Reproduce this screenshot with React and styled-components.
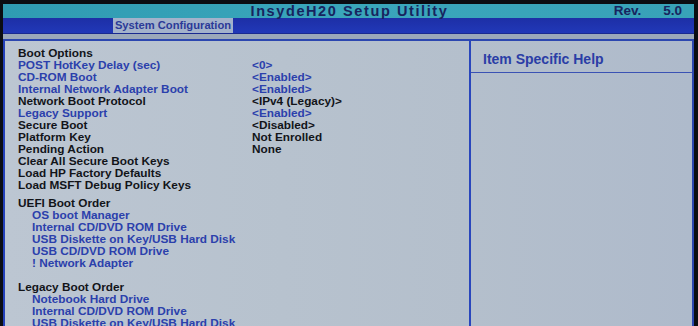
import styled, { createGlobalStyle } from "styled-components";

const Global = createGlobalStyle`
    html, body {
        margin: 0;
        padding: 0;
        background: #0b0d12;
    }
`

const options = [
    { label: "Boot Options", kind: "head" },
    { label: "POST HotKey Delay (sec)", value: "<0>", blue: true },
    { label: "CD-ROM Boot", value: "<Enabled>", blue: true },
    { label: "Internal Network Adapter Boot", value: "<Enabled>", blue: true },
    { label: "Network Boot Protocol", value: "<IPv4 (Legacy)>" },
    { label: "Legacy Support", value: "<Enabled>", blue: true },
    { label: "Secure Boot", value: "<Disabled>" },
    { label: "Platform Key", value: "Not Enrolled" },
    { label: "Pending Action", value: "None" },
    { label: "Clear All Secure Boot Keys" },
    { label: "Load HP Factory Defaults" },
    { label: "Load MSFT Debug Policy Keys" },
]

const uefiOrder = [
    "OS boot Manager",
    "Internal CD/DVD ROM Drive",
    "USB Diskette on Key/USB Hard Disk",
    "USB CD/DVD ROM Drive",
    "! Network Adapter",
]

const legacyOrder = [
    "Notebook Hard Drive",
    "Internal CD/DVD ROM Drive",
    "USB Diskette on Key/USB Hard Disk",
    "USB CD/DVD ROM Drive",
]

export default function App() {
    return (
        <>
            <Global />
            <Screen>
                <TitleBar>
                    <Title>InsydeH20 Setup Utility</Title>
                    <Rev>
                        <span>Rev.</span>
                        <span>5.0</span>
                    </Rev>
                </TitleBar>
                <MenuBar>
                    <Tab active>System Configuration</Tab>
                </MenuBar>
                <Body>
                    <MainPanel>
                        {options.map(o =>
                            <Row key={o.label}>
                                <Label blue={o.blue ? 1 : 0}>{o.label}</Label>
                                {o.value && <Value blue={o.blue ? 1 : 0}>{o.value}</Value>}
                            </Row>
                        )}
                        <Section gap={6}>
                            <Row><Label>UEFI Boot Order</Label></Row>
                            {uefiOrder.map(item =>
                                <Row key={item}><SubItem>{item}</SubItem></Row>
                            )}
                        </Section>
                        <Section gap={12}>
                            <Row><Label>Legacy Boot Order</Label></Row>
                            {legacyOrder.map(item =>
                                <Row key={item}><SubItem>{item}</SubItem></Row>
                            )}
                        </Section>
                    </MainPanel>
                    <HelpPanel>
                        <HelpHeader>Item Specific Help</HelpHeader>
                    </HelpPanel>
                </Body>
            </Screen>
        </>
    )
}

const Screen = styled.div`
    width: 698px;
    height: 326px;
    overflow: hidden;
    box-sizing: border-box;
    padding: 4px 4px 0 3px;
    display: flex;
    flex-direction: column;
    background: #0b0d12;
    font-family: "Liberation Sans", Arial, sans-serif;
`

const TitleBar = styled.div`
    position: relative;
    height: 14px;
    display: flex;
    align-items: center;
    justify-content: center;
    background: linear-gradient(90deg, #2f9bb2, #3aa6bb 50%, #38a2b8);
`

const Title = styled.div`
    margin-left: 2px;
    font-size: 14.5px;
    font-weight: bold;
    letter-spacing: 1.6px;
    color: #17245e;
    line-height: 14px;
    white-space: nowrap;
`

const Rev = styled.div`
    position: absolute;
    right: 12px;
    top: 0;
    display: flex;
    gap: 22px;
    font-size: 13.5px;
    font-weight: bold;
    line-height: 14px;
    color: #17245e;
`

const MenuBar = styled.div`
    height: 16px;
    display: flex;
    align-items: flex-end;
    padding-left: 110px;
    background: linear-gradient(180deg, #1d2fa6, #2138b8);
    border-bottom: 1px solid #1a2a90;
`

const Tab = styled.div`
    width: 120px;
    height: 15px;
    line-height: 15px;
    text-align: center;
    white-space: nowrap;
    font-size: 11.2px;
    font-weight: bold;
    color: #2b3a98;
    background: ${props => props.active ? "#a3b2cb" : "transparent"};
`

const Body = styled.div`
    flex: 1;
    display: flex;
    padding-top: 5px;
    background: linear-gradient(180deg, #9ba8ba 0, #9ba8ba 5px, transparent 5px);
`

const MainPanel = styled.div`
    width: 468px;
    box-sizing: border-box;
    padding: 6px 0 0 13px;
    border-top: 2px solid #2c47b0;
    border-left: 2px solid #2440b8;
    border-right: 2px solid #2946bc;
    background: linear-gradient(90deg, #bcc6d2, #b7c2ce 60%, #b4bfcc);
`

const Row = styled.div`
    display: flex;
    height: 12px;
    line-height: 12px;
    font-size: 11.8px;
    font-weight: bold;
    white-space: nowrap;
`

const Label = styled.div`
    width: 234px;
    color: ${props => props.blue ? "#2b40ac" : "#121419"};
`

const Value = styled.div`
    color: ${props => props.blue ? "#2b40ac" : "#121419"};
`

const SubItem = styled.div`
    padding-left: 14px;
    color: #2b40ac;
`

const Section = styled.div`
    margin-top: ${props => props.gap}px;
`

const HelpPanel = styled.div`
    flex: 1;
    border-top: 2px solid #2c47b0;
    border-right: 2px solid #2c47b0;
    background: linear-gradient(90deg, #b4bfcc, #aebacb);
`

const HelpHeader = styled.div`
    height: 32px;
    box-sizing: border-box;
    padding: 10px 0 0 12px;
    font-size: 14px;
    font-weight: bold;
    color: #2a3da6;
    border-bottom: 1px solid #3a52b4;
`
